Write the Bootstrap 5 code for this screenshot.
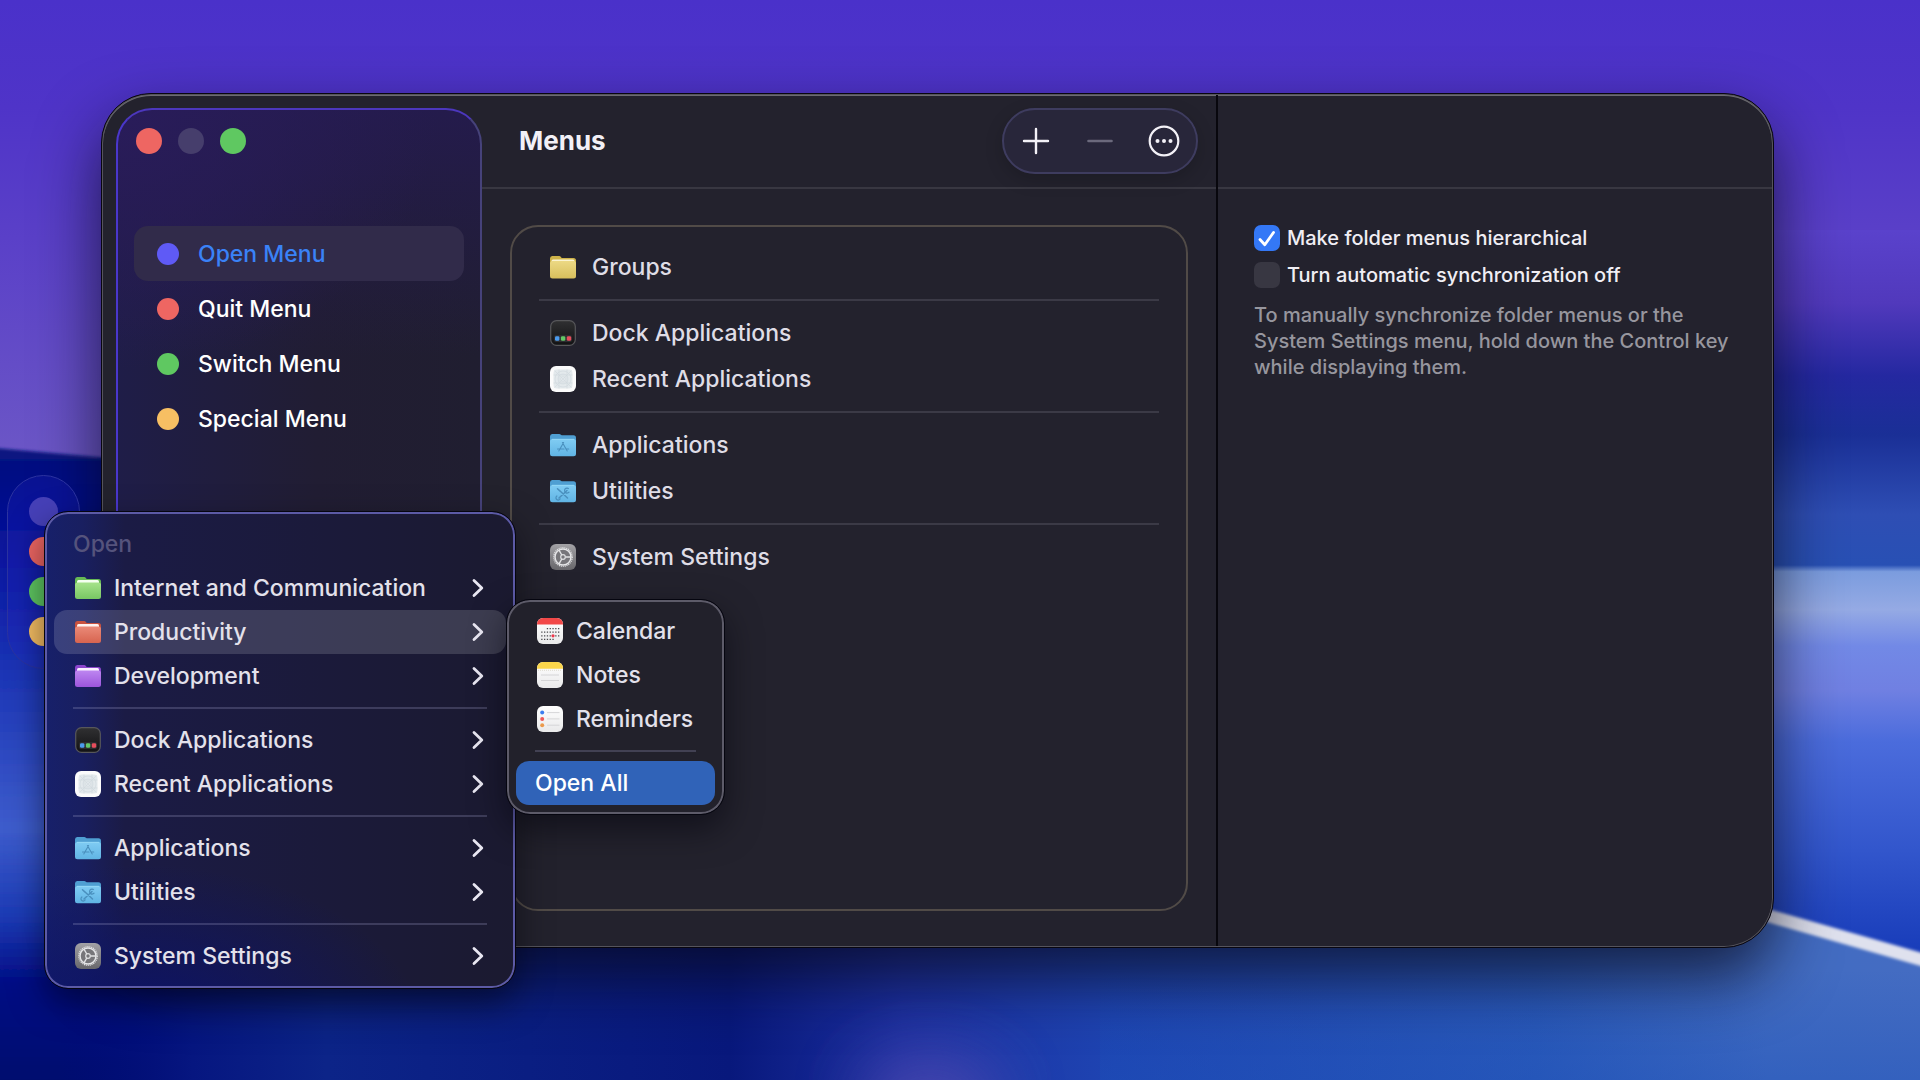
<!DOCTYPE html>
<html lang="en" data-bs-theme="dark">
<head>
<meta charset="utf-8">
<meta name="viewport" content="width=device-width, initial-scale=1">
<title>Menus</title>
<link rel="stylesheet" href="https://cdn.jsdelivr.net/npm/bootstrap@5.3.0/dist/css/bootstrap.min.css">
<style>
  body { font-family: Inter, "Liberation Sans", sans-serif; font-size: 23px; line-height: 28px; font-weight: 500; color: #dfdde6; background: #0a1670; }
  .desktop { min-height: 100vh; }
  .wallpaper { inset: 0; }
  .app-window { top: 93px; right: 146px; bottom: 132px; left: 101px; padding: 14px 0 14px 14px; background: #23222d; border: 1px solid #08060f; border-radius: 50px; box-shadow: inset 0 0 0 1px #55545c, inset 0 1px 0 1px #6c6b70, 0 30px 64px rgba(8, 8, 24, .72); }
  .side-pane { flex: 0 0 366px; padding: 18px 16px; border: 2px solid; border-color: #4c37bd #46427a #333060 #4a37cc; border-radius: 36px; background: radial-gradient(320px 260px at 0 0, #291c5a 0%, rgba(41, 28, 90, 0) 100%), linear-gradient(180deg, #241b4c 0%, rgba(33, 29, 51, 0) 30%), linear-gradient(90deg, #1f1d48 0%, #211d33 55%, #201e30 100%); }
  .lights { height: 26px; gap: 16px; margin-bottom: 72px; }
  .light-dot { width: 26px; height: 26px; border: 0; border-radius: 50%; padding: 0; }
  .lights .light-dot:first-child { margin-left: 2px; }
  .tone-red { background: #ee6662; }
  .tone-green { background: #5fc861; }
  .tone-amber { background: #f7bf63; }
  .tone-blue { background: #5f5af6; }
  .tone-off { background: #463e6c; }
  .side-link { height: 55px; gap: 19px; padding: 0 23px; border-radius: 14px; color: #fff; text-decoration: none; }
  .side-link.active { background: #312b4a; color: #3a82f7; }
  .side-dot { width: 22px; height: 22px; border-radius: 50%; }
  .main-pane { flex: 1 1 736px; margin: -13px 0; border-right: 2px solid #08070d; }
  .info-pane { flex: 1 1 554px; margin: -13px 1px -13px 0; }
  .pane-bar { height: 94px; border-bottom: 2px solid #383741; }
  .main-pane .pane-bar { padding: 0 18px 0 37px; }
  .pane-title { font-size: 26px; line-height: 32px; font-weight: 700; color: #f2f0f6; }
  .tool-pill { height: 66px; padding: 0 15px; gap: 30px; border: 2px solid #3e3c5f; border-radius: 33px; background: #28263a; box-shadow: 0 6px 18px rgba(0, 0, 0, .18); }
  .tool-btn { width: 34px; height: 34px; padding: 0; border: 0; background: none; }
  .tool-btn svg, .menu-icon { display: block; }
  .list-box { margin: 36px 28px 35px; padding: 17px 27px; border: 2px solid #514b47; border-radius: 28px; }
  .list-entry { height: 46px; padding: 0 11px; gap: 16px; }
  .menu-icon { width: 26px; height: 26px; flex: none; }
  .rule { margin: 9px 0; height: 2px; border: 0; opacity: 1; background: #3b3a46; }
  .options { padding: 36px 30px 0 36px; font-size: 20px; line-height: 26px; color: #f0eef4; }
  .option { gap: 7px; margin-bottom: 11px; min-height: 0; padding: 0; }
  .option .form-check-input { float: none; width: 26px; height: 26px; margin: 0; border: 0; border-radius: 7px; background-color: #383742; flex: none; }
  .option .form-check-input:checked { background-color: #3478f6; background-image: none; }
  .option-tick { left: 0; top: 0; pointer-events: none; }
  .hint { color: #97969e; margin: 14px 0 0; }
  .dock-pill { left: 7px; top: 475px; width: 73px; height: 194px; padding: 21px 0; gap: 11px; border: 1px solid #2c33a0; border-radius: 37px; background: rgba(40, 40, 200, .22); }
  .dock-dot { width: 29px; height: 29px; border: 0; border-radius: 50%; padding: 0; }
  .tone-dusk { background: #4640b8; }
  .float-menu { min-width: 0; padding: 9px; border: 1px solid #05050f; border-radius: 24px; font-size: 23px; }
  .open-menu { left: 44px; top: 511px; width: 472px; padding: 10px 9px; background: radial-gradient(60% 34% at 20% 108%, #0b1268 0%, rgba(11, 18, 104, 0) 100%), linear-gradient(90deg, #17206a 0%, #191f60 8%, #1b1b45 17%, #1b1a3a 60%, #1b1a30 100%); box-shadow: inset 0 0 0 2px #5c5aa6, 0 14px 34px rgba(0, 0, 10, .5); }
  .sub-menu { left: 506px; top: 599px; width: 219px; background: #22212b; box-shadow: inset 0 0 0 2px #5d5b69, 0 14px 34px rgba(0, 0, 10, .5); }
  .float-menu .dropdown-item { display: flex; align-items: center; height: 44px; gap: 13px; padding: 0 22px 0 21px; border-radius: 13px; color: #e3e1eb; line-height: 28px; font-weight: 500; }
  .float-menu .dropdown-item.current { background: rgba(255, 255, 255, .15); }
  .float-menu .dropdown-item.chosen { padding-left: 19px; background: #3063b8; color: #fff; }
  .float-menu .dropdown-header { height: 44px; padding: 8px 19px; font-size: 23px; line-height: 28px; font-weight: 500; color: #55537c; }
  .float-menu .rule { margin: 9px 19px; background: rgba(160, 160, 200, .26); }
</style>
</head>
<body>
<svg width="0" height="0" class="position-absolute" aria-hidden="true">
  <defs>
    <linearGradient id="gYellow" x2="0" y2="1"><stop stop-color="#ecd984"/><stop offset="1" stop-color="#d8bf5c"/></linearGradient>
    <linearGradient id="gGreen" x2="0" y2="1"><stop stop-color="#a6e38b"/><stop offset="1" stop-color="#78c763"/></linearGradient>
    <linearGradient id="gRed" x2="0" y2="1"><stop stop-color="#ea8a78"/><stop offset="1" stop-color="#d7644f"/></linearGradient>
    <linearGradient id="gPurple" x2="0" y2="1"><stop stop-color="#bd86f0"/><stop offset="1" stop-color="#9c55dc"/></linearGradient>
    <linearGradient id="gBlue" x2="0" y2="1"><stop stop-color="#80ccf3"/><stop offset="1" stop-color="#60b4e4"/></linearGradient>
    <linearGradient id="gGrey" x2="0" y2="1"><stop stop-color="#a3a2a6"/><stop offset="1" stop-color="#68676b"/></linearGradient>
    <linearGradient id="gDark" x2="0" y2="1"><stop stop-color="#303032"/><stop offset="1" stop-color="#121214"/></linearGradient>
    <linearGradient id="gWhite" x2="0" y2="1"><stop stop-color="#fff"/><stop offset="1" stop-color="#e9e9ea"/></linearGradient>
  </defs>
  <symbol id="folderYellow" viewBox="0 0 26 26"><path d="M0 4.500Q0 2 2.200 2h7q1 0 1.700 1l.8 1H23.500Q26 4 26 6.500V20H0z" fill="#cdb249"/><rect x="1.500" y="5.500" width="23" height="5" rx="1.500" fill="#fbf4d2"/><rect y="7" width="26" height="17.500" rx="2.500" fill="url(#gYellow)"/></symbol>
  <symbol id="folderGreen" viewBox="0 0 26 26"><path d="M0 4.500Q0 2 2.200 2h7q1 0 1.700 1l.8 1H23.500Q26 4 26 6.500V20H0z" fill="#67b955"/><rect x="2" y="5" width="22" height="5" rx="1.500" fill="#f4fff0"/><rect y="7.500" width="26" height="16.500" rx="2.500" fill="url(#gGreen)"/></symbol>
  <symbol id="folderRed" viewBox="0 0 26 26"><path d="M0 4.500Q0 2 2.200 2h7q1 0 1.700 1l.8 1H23.500Q26 4 26 6.500V20H0z" fill="#c9523f"/><rect x="2" y="5" width="22" height="5" rx="1.500" fill="#fff2ee"/><rect y="7.500" width="26" height="16.500" rx="2.500" fill="url(#gRed)"/></symbol>
  <symbol id="folderPurple" viewBox="0 0 26 26"><path d="M0 4.500Q0 2 2.200 2h7q1 0 1.700 1l.8 1H23.500Q26 4 26 6.500V20H0z" fill="#8c46cc"/><rect x="2" y="5" width="22" height="5" rx="1.500" fill="#faf2ff"/><rect y="7.500" width="26" height="16.500" rx="2.500" fill="url(#gPurple)"/></symbol>
  <symbol id="folderBlue" viewBox="0 0 26 26"><path d="M0 4.500Q0 2 2.200 2h7q1 0 1.700 .7l.8.6H23.500Q26 3.300 26 6V20H0z" fill="#4f9fd2"/><rect y="7" width="26" height="17.300" rx="2.500" fill="url(#gBlue)"/><path d="M2 7.300H24" stroke="#9adcf8" stroke-width=".8"/></symbol>
  <symbol id="appsFolder" viewBox="0 0 26 26"><use href="#folderBlue"/><path d="M13.600 10.500L8.800 19M12.400 10.500L17.200 19M7.500 17h6.500M16 17h2.700" stroke="#4a90be" stroke-width="1.100" fill="none" stroke-linecap="round"/></symbol>
  <symbol id="toolsFolder" viewBox="0 0 26 26"><use href="#folderBlue"/><path d="M9 12l8.500 8M7.500 10.800l2.300 2.200M17 12.500L9 20" stroke="#4a90be" stroke-width="1.500" fill="none" stroke-linecap="round"/><path d="M18.800 10.700a2.500 2.500 0 1 0 .5 3M7.300 17.800a2.200 2.200 0 1 0 3 2.500" stroke="#4a90be" stroke-width="1.200" fill="none"/></symbol>
  <symbol id="dockApp" viewBox="0 0 26 26"><rect x=".7" y=".7" width="24.600" height="24.600" rx="5.800" fill="url(#gDark)" stroke="#57575a" stroke-width="1.200"/><rect x="4" y="15" width="18" height="7" rx="2" fill="#2d2d30"/><rect x="5" y="16.200" width="4.400" height="4.600" rx="1.400" fill="#4b9bee"/><rect x="10.900" y="16.200" width="4.400" height="4.600" rx="1.400" fill="#62c866"/><rect x="16.800" y="16.200" width="4.400" height="4.600" rx="1.400" fill="#e64d5c"/></symbol>
  <symbol id="recentApp" viewBox="0 0 26 26"><rect width="26" height="26" rx="6" fill="#fbfbfb"/><rect x="3.500" y="3.500" width="19" height="19" rx="3.500" fill="#e3e9ec"/><g fill="none" stroke="#d0d9dd" stroke-width=".6"><circle cx="13" cy="13" r="8"/><circle cx="13" cy="13" r="5"/><circle cx="13" cy="13" r="2.500"/><path d="M3.500 9h19M3.500 17h19M9 3.500v19M17 3.500v19M4.500 4.500l17 17M21.500 4.500l-17 17"/></g></symbol>
  <symbol id="gearApp" viewBox="0 0 26 26"><rect width="26" height="26" rx="6" fill="url(#gGrey)"/><circle cx="13" cy="13" r="9.300" fill="none" stroke="#e2e2e4" stroke-width="1.200" stroke-dasharray="1.100 .85"/><circle cx="13" cy="13" r="8" fill="#77767a" stroke="#e6e6e8" stroke-width="1.500"/><circle cx="13" cy="13" r="2.300" fill="none" stroke="#dedee0" stroke-width="1.200"/><path d="M15.400 13H21M11.800 11L9 6.100M11.800 15L9 19.900" stroke="#e2e2e4" stroke-width="1.400"/></symbol>
  <symbol id="calApp" viewBox="0 0 26 26"><rect width="26" height="26" rx="6" fill="url(#gWhite)"/><path d="M0 6.500V6a6 6 0 0 1 6-6h14a6 6 0 0 1 6 6v.5z" fill="#f24848"/><g stroke="#4a4a4d" stroke-width="1.300" stroke-dasharray="1.300 1.500"><path d="M9.800 10.600H22.500M4.200 14.200H22.500M4.200 17.800H22.500M4.200 21.400H17"/></g><circle cx="16" cy="17.800" r="1.600" fill="#f0384c"/></symbol>
  <symbol id="notesApp" viewBox="0 0 26 26"><rect width="26" height="26" rx="6" fill="url(#gWhite)"/><path d="M0 6.800V6a6 6 0 0 1 6-6h14a6 6 0 0 1 6 6v.8z" fill="#fad54b"/><path d="M1 8.300H25" stroke="#d8d4c4" stroke-width=".8" stroke-dasharray="1 1"/><path d="M4 13H22M4 18.500H22" stroke="#d4d4d6"/></symbol>
  <symbol id="remindApp" viewBox="0 0 26 26"><rect width="26" height="26" rx="6" fill="url(#gWhite)"/><circle cx="5.200" cy="6.600" r="2" fill="#3c7ef0"/><circle cx="5.200" cy="12.900" r="2" fill="#ee5a5a"/><circle cx="5.200" cy="19.200" r="2" fill="#eb9a4c"/><path d="M10 6.600H22.500M10 12.900H22.500M10 19.200H22.500" stroke="#d6d6d8"/></symbol>
  <symbol id="chev" viewBox="0 0 12 20"><path d="M2 2.500L9.800 10L2 17.500" fill="none" stroke="#e9e7f2" stroke-width="2.800" stroke-linecap="round" stroke-linejoin="round"/></symbol>
</svg>

<div class="desktop position-relative overflow-hidden">
  <svg class="wallpaper position-absolute w-100 h-100" viewBox="0 0 1920 1080" preserveAspectRatio="none" aria-hidden="true">
    <defs>
      <linearGradient id="sky" x2="0" y2="1"><stop stop-color="#4a31ca"/><stop offset=".1" stop-color="#4f34c8"/><stop offset=".22" stop-color="#5a40c8"/><stop offset=".42" stop-color="#6b56c6"/></linearGradient>
      <linearGradient id="leftSea" gradientUnits="userSpaceOnUse" x1="0" y1="450" x2="0" y2="1080"><stop stop-color="#0a1a80"/><stop offset=".04" stop-color="#000684"/><stop offset=".18" stop-color="#0a18a0"/><stop offset=".34" stop-color="#1a32b4"/><stop offset=".6" stop-color="#3d5ccc"/><stop offset=".74" stop-color="#1c3ab4"/><stop offset=".85" stop-color="#000c84"/><stop offset="1" stop-color="#00086e"/></linearGradient>
      <linearGradient id="rightSea" gradientUnits="userSpaceOnUse" x1="0" y1="230" x2="0" y2="960"><stop stop-color="#5a42cc"/><stop offset=".1" stop-color="#5139bc"/><stop offset=".2" stop-color="#2428a0"/><stop offset=".28" stop-color="#1a2f96"/><stop offset=".39" stop-color="#2e4eb4"/><stop offset=".459" stop-color="#2850b4"/><stop offset=".468" stop-color="#7b9cde"/><stop offset=".52" stop-color="#95aae4"/><stop offset=".57" stop-color="#7289e6"/><stop offset=".63" stop-color="#7080e2"/><stop offset=".7" stop-color="#4b6cdc"/><stop offset=".85" stop-color="#3256cc"/><stop offset="1" stop-color="#163ab8"/></linearGradient>
      <linearGradient id="floor" gradientUnits="userSpaceOnUse" x1="0" y1="0" x2="1920" y2="0"><stop offset=".03" stop-color="#000a78" stop-opacity="0"/><stop offset=".1" stop-color="#061680"/><stop offset=".17" stop-color="#0c2488"/><stop offset=".38" stop-color="#08187c"/><stop offset=".47" stop-color="#1c30a0"/><stop offset=".58" stop-color="#1e44b2"/><stop offset=".8" stop-color="#2b5aba"/><stop offset=".92" stop-color="#426cc2"/><stop offset="1" stop-color="#446cc2"/></linearGradient>
      <linearGradient id="floorShade" x2="0" y2="1"><stop stop-color="#1c50b8" stop-opacity="0"/><stop offset="1" stop-color="#1c50b8" stop-opacity=".4"/></linearGradient>
      <filter id="soft" x="-100%" y="-100%" width="300%" height="300%"><feGaussianBlur stdDeviation="34"/></filter>
      <filter id="edge"><feGaussianBlur stdDeviation="1.500"/></filter>
    </defs>
    <rect width="1920" height="1080" fill="url(#sky)"/>
    <path d="M-5 448L300 475V1085H-5z" fill="url(#leftSea)" filter="url(#edge)"/>
    <rect x="250" y="800" width="760" height="280" fill="#08187c"/>
    <rect x="1000" y="230" width="920" height="850" fill="url(#rightSea)"/>
    <path d="M0 920H1500L1700 892L1925 958V1080H0z" fill="url(#floor)"/>
    <rect x="1100" y="970" width="820" height="110" fill="url(#floorShade)"/>
    <path d="M1700 896L1930 962" stroke="#dfe1ee" stroke-width="13" filter="url(#edge)"/>
    <ellipse cx="930" cy="1100" rx="70" ry="40" fill="#5a50b4" opacity=".8" filter="url(#soft)"/>
  </svg>

  <main class="app-window position-absolute d-flex overflow-hidden">
    <nav class="side-pane d-flex flex-column" aria-label="Menus">
      <div class="lights d-flex">
        <button type="button" class="light-dot tone-red" aria-label="Close"></button>
        <button type="button" class="light-dot tone-off" aria-label="Minimize"></button>
        <button type="button" class="light-dot tone-green" aria-label="Zoom"></button>
      </div>
      <a href="#" class="side-link active d-flex align-items-center"><span class="side-dot tone-blue"></span>Open Menu</a>
      <a href="#" class="side-link d-flex align-items-center"><span class="side-dot tone-red"></span>Quit Menu</a>
      <a href="#" class="side-link d-flex align-items-center"><span class="side-dot tone-green"></span>Switch Menu</a>
      <a href="#" class="side-link d-flex align-items-center"><span class="side-dot tone-amber"></span>Special Menu</a>
    </nav>

    <section class="main-pane d-flex flex-column">
      <header class="pane-bar d-flex align-items-center justify-content-between flex-shrink-0">
        <h1 class="pane-title m-0">Menus</h1>
        <div class="tool-pill d-flex align-items-center" role="toolbar" aria-label="Menu tools">
          <button type="button" class="tool-btn" aria-label="Add"><svg width="34" height="34" viewBox="0 0 34 34"><path d="M5 17H29M17 5V29" stroke="#f3f1f7" stroke-width="2.400" stroke-linecap="round"/></svg></button>
          <button type="button" class="tool-btn" aria-label="Remove"><svg width="34" height="34" viewBox="0 0 34 34"><path d="M5.500 17H28.500" stroke="#6b697c" stroke-width="2.600" stroke-linecap="round"/></svg></button>
          <button type="button" class="tool-btn" aria-label="More"><svg width="34" height="34" viewBox="0 0 34 34"><circle cx="17" cy="17" r="14.300" fill="none" stroke="#f3f1f7" stroke-width="2.200"/><g fill="#f3f1f7"><circle cx="10.500" cy="17" r="2"/><circle cx="17" cy="17" r="2"/><circle cx="23.500" cy="17" r="2"/></g></svg></button>
        </div>
      </header>
      <div class="list-box flex-grow-1">
        <div class="list-entry d-flex align-items-center"><svg class="menu-icon"><use href="#folderYellow"/></svg>Groups</div>
        <hr class="rule">
        <div class="list-entry d-flex align-items-center"><svg class="menu-icon"><use href="#dockApp"/></svg>Dock Applications</div>
        <div class="list-entry d-flex align-items-center"><svg class="menu-icon"><use href="#recentApp"/></svg>Recent Applications</div>
        <hr class="rule">
        <div class="list-entry d-flex align-items-center"><svg class="menu-icon"><use href="#appsFolder"/></svg>Applications</div>
        <div class="list-entry d-flex align-items-center"><svg class="menu-icon"><use href="#toolsFolder"/></svg>Utilities</div>
        <hr class="rule">
        <div class="list-entry d-flex align-items-center"><svg class="menu-icon"><use href="#gearApp"/></svg>System Settings</div>
      </div>
    </section>

    <section class="info-pane">
      <div class="pane-bar"></div>
      <form class="options">
        <div class="option form-check d-flex align-items-center position-relative">
          <input class="form-check-input" type="checkbox" id="hier" checked>
          <svg class="option-tick position-absolute" width="26" height="26" viewBox="0 0 26 26" aria-hidden="true"><path d="M6 14.500L10.800 19.800L19.500 7.500" fill="none" stroke="#fff" stroke-width="2.800" stroke-linecap="round" stroke-linejoin="round"/></svg>
          <label class="form-check-label" for="hier">Make folder menus hierarchical</label>
        </div>
        <div class="option form-check d-flex align-items-center">
          <input class="form-check-input" type="checkbox" id="sync">
          <label class="form-check-label" for="sync">Turn automatic synchronization off</label>
        </div>
        <p class="hint">To manually synchronize folder menus or the System Settings menu, hold down the Control key while displaying them.</p>
      </form>
    </section>
  </main>

  <div class="dock-pill position-absolute d-flex flex-column align-items-center">
    <button type="button" class="dock-dot tone-dusk" aria-label="Open"></button>
    <button type="button" class="dock-dot tone-red" aria-label="Quit"></button>
    <button type="button" class="dock-dot tone-green" aria-label="Switch"></button>
    <button type="button" class="dock-dot tone-amber" aria-label="Special"></button>
  </div>

  <ul class="dropdown-menu show float-menu open-menu">
    <li><h2 class="dropdown-header">Open</h2></li>
    <li><button type="button" class="dropdown-item"><svg class="menu-icon"><use href="#folderGreen"/></svg>Internet and Communication<svg class="ms-auto" width="12" height="20"><use href="#chev"/></svg></button></li>
    <li><button type="button" class="dropdown-item current"><svg class="menu-icon"><use href="#folderRed"/></svg>Productivity<svg class="ms-auto" width="12" height="20"><use href="#chev"/></svg></button></li>
    <li><button type="button" class="dropdown-item"><svg class="menu-icon"><use href="#folderPurple"/></svg>Development<svg class="ms-auto" width="12" height="20"><use href="#chev"/></svg></button></li>
    <li><hr class="rule"></li>
    <li><button type="button" class="dropdown-item"><svg class="menu-icon"><use href="#dockApp"/></svg>Dock Applications<svg class="ms-auto" width="12" height="20"><use href="#chev"/></svg></button></li>
    <li><button type="button" class="dropdown-item"><svg class="menu-icon"><use href="#recentApp"/></svg>Recent Applications<svg class="ms-auto" width="12" height="20"><use href="#chev"/></svg></button></li>
    <li><hr class="rule"></li>
    <li><button type="button" class="dropdown-item"><svg class="menu-icon"><use href="#appsFolder"/></svg>Applications<svg class="ms-auto" width="12" height="20"><use href="#chev"/></svg></button></li>
    <li><button type="button" class="dropdown-item"><svg class="menu-icon"><use href="#toolsFolder"/></svg>Utilities<svg class="ms-auto" width="12" height="20"><use href="#chev"/></svg></button></li>
    <li><hr class="rule"></li>
    <li><button type="button" class="dropdown-item"><svg class="menu-icon"><use href="#gearApp"/></svg>System Settings<svg class="ms-auto" width="12" height="20"><use href="#chev"/></svg></button></li>
  </ul>

  <ul class="dropdown-menu show float-menu sub-menu">
    <li><button type="button" class="dropdown-item"><svg class="menu-icon"><use href="#calApp"/></svg>Calendar</button></li>
    <li><button type="button" class="dropdown-item"><svg class="menu-icon"><use href="#notesApp"/></svg>Notes</button></li>
    <li><button type="button" class="dropdown-item"><svg class="menu-icon"><use href="#remindApp"/></svg>Reminders</button></li>
    <li><hr class="rule"></li>
    <li><button type="button" class="dropdown-item chosen">Open All</button></li>
  </ul>
</div>
<script src="https://cdn.jsdelivr.net/npm/bootstrap@5.3.0/dist/js/bootstrap.bundle.min.js"></script>
</body>
</html>
